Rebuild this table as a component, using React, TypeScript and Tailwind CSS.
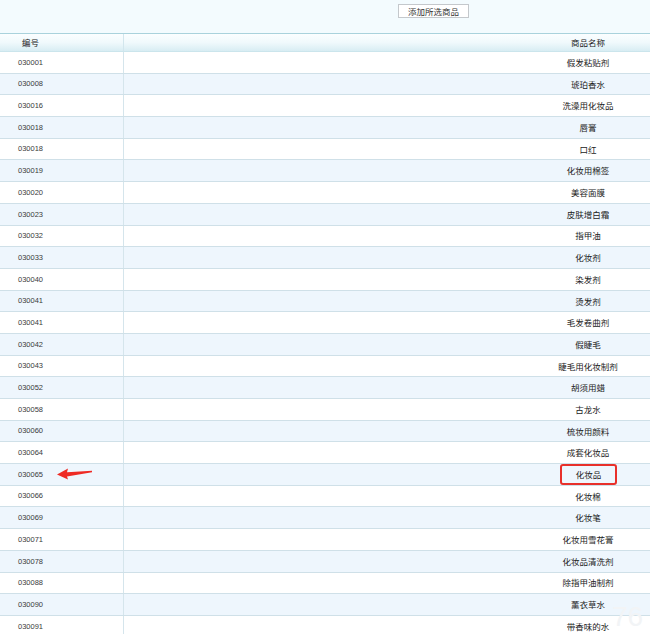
import React from 'react';

const rows: [string, string][] = [
  ['030001', '假发粘贴剂'],
  ['030008', '琥珀香水'],
  ['030016', '洗澡用化妆品'],
  ['030018', '唇膏'],
  ['030018', '口红'],
  ['030019', '化妆用棉签'],
  ['030020', '美容面膜'],
  ['030023', '皮肤增白霜'],
  ['030032', '指甲油'],
  ['030033', '化妆剂'],
  ['030040', '染发剂'],
  ['030041', '烫发剂'],
  ['030041', '毛发卷曲剂'],
  ['030042', '假睫毛'],
  ['030043', '睫毛用化妆制剂'],
  ['030052', '胡须用蜡'],
  ['030058', '古龙水'],
  ['030060', '梳妆用颜料'],
  ['030064', '成套化妆品'],
  ['030065', '化妆品'],
  ['030066', '化妆棉'],
  ['030069', '化妆笔'],
  ['030071', '化妆用雪花膏'],
  ['030078', '化妆品清洗剂'],
  ['030088', '除指甲油制剂'],
  ['030090', '薰衣草水'],
  ['030091', '带香味的水'],
];

const cjk = "font-['Noto_Sans_CJK_SC',sans-serif]";

export default function App() {
  return (
    <div className="relative w-[650px] h-[634px] overflow-hidden bg-white">
      {/* toolbar */}
      <div className="h-[33px] bg-[#f3fbfe] flex justify-center pt-[4px]">
        <button
          className={`ml-[217px] h-[14px] w-[71px] border border-[#c4c8cc] bg-white text-[8.5px] leading-[12px] text-[#333] ${cjk}`}
        >
          添加所选商品
        </button>
      </div>

      <div className="w-[1052px]">
        {/* header */}
        <div className="flex h-[19px] border-t border-[#a9d2dc] bg-gradient-to-b from-[#fbfeff] via-[#f0f9fc] to-[#d8edf3] border-b border-b-[#cbe5ec]">
          <div className={`w-[124px] border-r border-[#d2e6ed] pl-[22px] text-[8.5px] leading-[17px] text-[#222] ${cjk}`}>
            编号
          </div>
          <div className={`flex-1 text-center text-[8.5px] leading-[17px] text-[#222] ${cjk}`}>
            商品名称
          </div>
        </div>

        {rows.map(([code, name], i) => (
          <div
            key={i}
            className={`flex h-[21.7px] border-b border-[#cfe0e8] ${i % 2 === 1 ? 'bg-[#eef6fd]' : 'bg-white'}`}
          >
            <div className="w-[124px] border-r border-[#d5e5ec] pl-[18px] flex items-center text-[7.5px] text-[#3a3a3a] font-['Liberation_Sans',sans-serif]">
              {code}
            </div>
            <div className={`flex-1 flex items-center justify-center text-[8.5px] text-[#222] ${cjk}`}>
              {code === '030065' ? (
                <span className="ml-[1px] w-[57px] h-[21px] border-2 border-[#e8302a] rounded-[3px] flex items-center justify-center">
                  {name}
                </span>
              ) : (
                name
              )}
            </div>
          </div>
        ))}
      </div>

      {/* annotation arrow */}
      <svg className="absolute left-[55px] top-[467px]" width="40" height="14" viewBox="0 0 40 14">
        <path d="M2 7.5 L13 1.5 L12 5.2 L37 3.8 L37 5.2 L12 9.5 L13 12.5 Z" fill="#ee2a24" />
      </svg>

      {/* faint watermark */}
      <div className="absolute left-[612px] top-[596px] text-[28px] text-[#f2f4f6] font-['Liberation_Sans',sans-serif]">
        76
      </div>
    </div>
  );
}
